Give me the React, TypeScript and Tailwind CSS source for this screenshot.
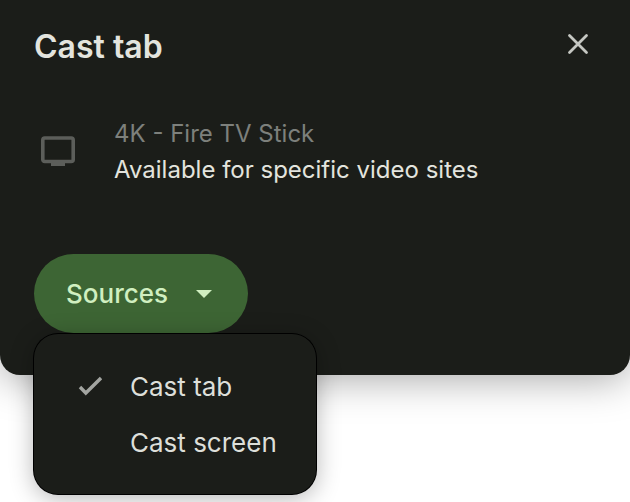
import { useState } from 'react';

const SOURCES = ['Cast tab', 'Cast screen'];

function CloseIcon() {
  return (
    <svg viewBox="0 0 24 24" className="w-6 h-6" fill="none" stroke="currentColor" strokeWidth="2.8" strokeLinecap="round" aria-hidden="true">
      <path d="M3.5 3.5l17 17M20.5 3.5l-17 17" />
    </svg>
  );
}

function TvIcon() {
  return (
    <svg viewBox="0 0 36 34" className="w-9 h-[34px] shrink-0 text-[#5c5e5a]" aria-hidden="true">
      <rect x="2.8" y="3" width="30.4" height="23.5" rx="2" fill="none" stroke="currentColor" strokeWidth="3.6" />
      <path d="M11 27h14v4H11z" fill="currentColor" />
    </svg>
  );
}

function CheckIcon() {
  return (
    <svg viewBox="0 0 24 24" className="w-6 h-6" fill="none" stroke="currentColor" strokeWidth="3.4" aria-hidden="true">
      <path d="M2 13l5.8 6L23 4" />
    </svg>
  );
}

interface SourceMenuProps {
  selected: string;
  onSelect: (source: string) => void;
}

function SourceMenu({ selected, onSelect }: SourceMenuProps) {
  return (
    <div
      role="menu"
      className="absolute top-full left-0 z-10 mt-px w-[282px] py-6 bg-[#1b1d19] rounded-3xl ring-1 ring-black shadow-[0_4px_24px_rgba(0,0,0,0.3)]"
    >
      {SOURCES.map((source) => (
        <button
          key={source}
          type="button"
          role="menuitemradio"
          aria-checked={source === selected}
          onClick={() => onSelect(source)}
          className="flex items-center gap-7 w-full h-14 px-11 text-[26px] whitespace-nowrap text-[#dddfd9]"
        >
          <span className="w-6 h-6 shrink-0 text-[#a3a5a1]">{source === selected && <CheckIcon />}</span>
          {source}
        </button>
      ))}
    </div>
  );
}

export default function App() {
  const [source, setSource] = useState('Cast tab');
  const [menuOpen, setMenuOpen] = useState(true);

  return (
    <div className="min-h-screen overflow-hidden bg-white font-['Inter',sans-serif]">
      <section
        aria-label="Cast"
        className="px-[34px] pt-6 pb-[42px] bg-[#1b1d19] text-[#e3e4de] rounded-b-[20px] shadow-[0_4px_40px_rgba(0,0,0,0.35)]"
      >
        {/* Title */}
        <header className="flex items-start justify-between">
          <h1 className="text-[32px] leading-[46px] font-semibold">Cast tab</h1>
          <button type="button" aria-label="Close" className="flex items-center h-10 mr-1.5 text-[#c5c7c2]">
            <CloseIcon />
          </button>
        </header>

        {/* Device */}
        <div className="flex items-center gap-[38px] mt-[46px] pl-1.5 h-[72px] text-2xl leading-9">
          <TvIcon />
          <div className="whitespace-nowrap">
            <div className="text-[#7d807c]">4K - Fire TV Stick</div>
            <div>Available for specific video sites</div>
          </div>
        </div>

        {/* Source picker */}
        <div className="relative mt-[66px] w-fit">
          <button
            type="button"
            aria-haspopup="menu"
            aria-expanded={menuOpen}
            onClick={() => setMenuOpen(!menuOpen)}
            className="flex items-center gap-7 h-[79px] pl-8 pr-9 rounded-full bg-[#3d6534] text-[#d0efc0] text-[26px] font-medium"
          >
            Sources
            <svg viewBox="0 0 16 8" className="w-4 h-2" fill="currentColor" aria-hidden="true">
              <path d="M0 0h16L8 8z" />
            </svg>
          </button>
          {menuOpen && <SourceMenu selected={source} onSelect={setSource} />}
        </div>
      </section>
    </div>
  );
}
